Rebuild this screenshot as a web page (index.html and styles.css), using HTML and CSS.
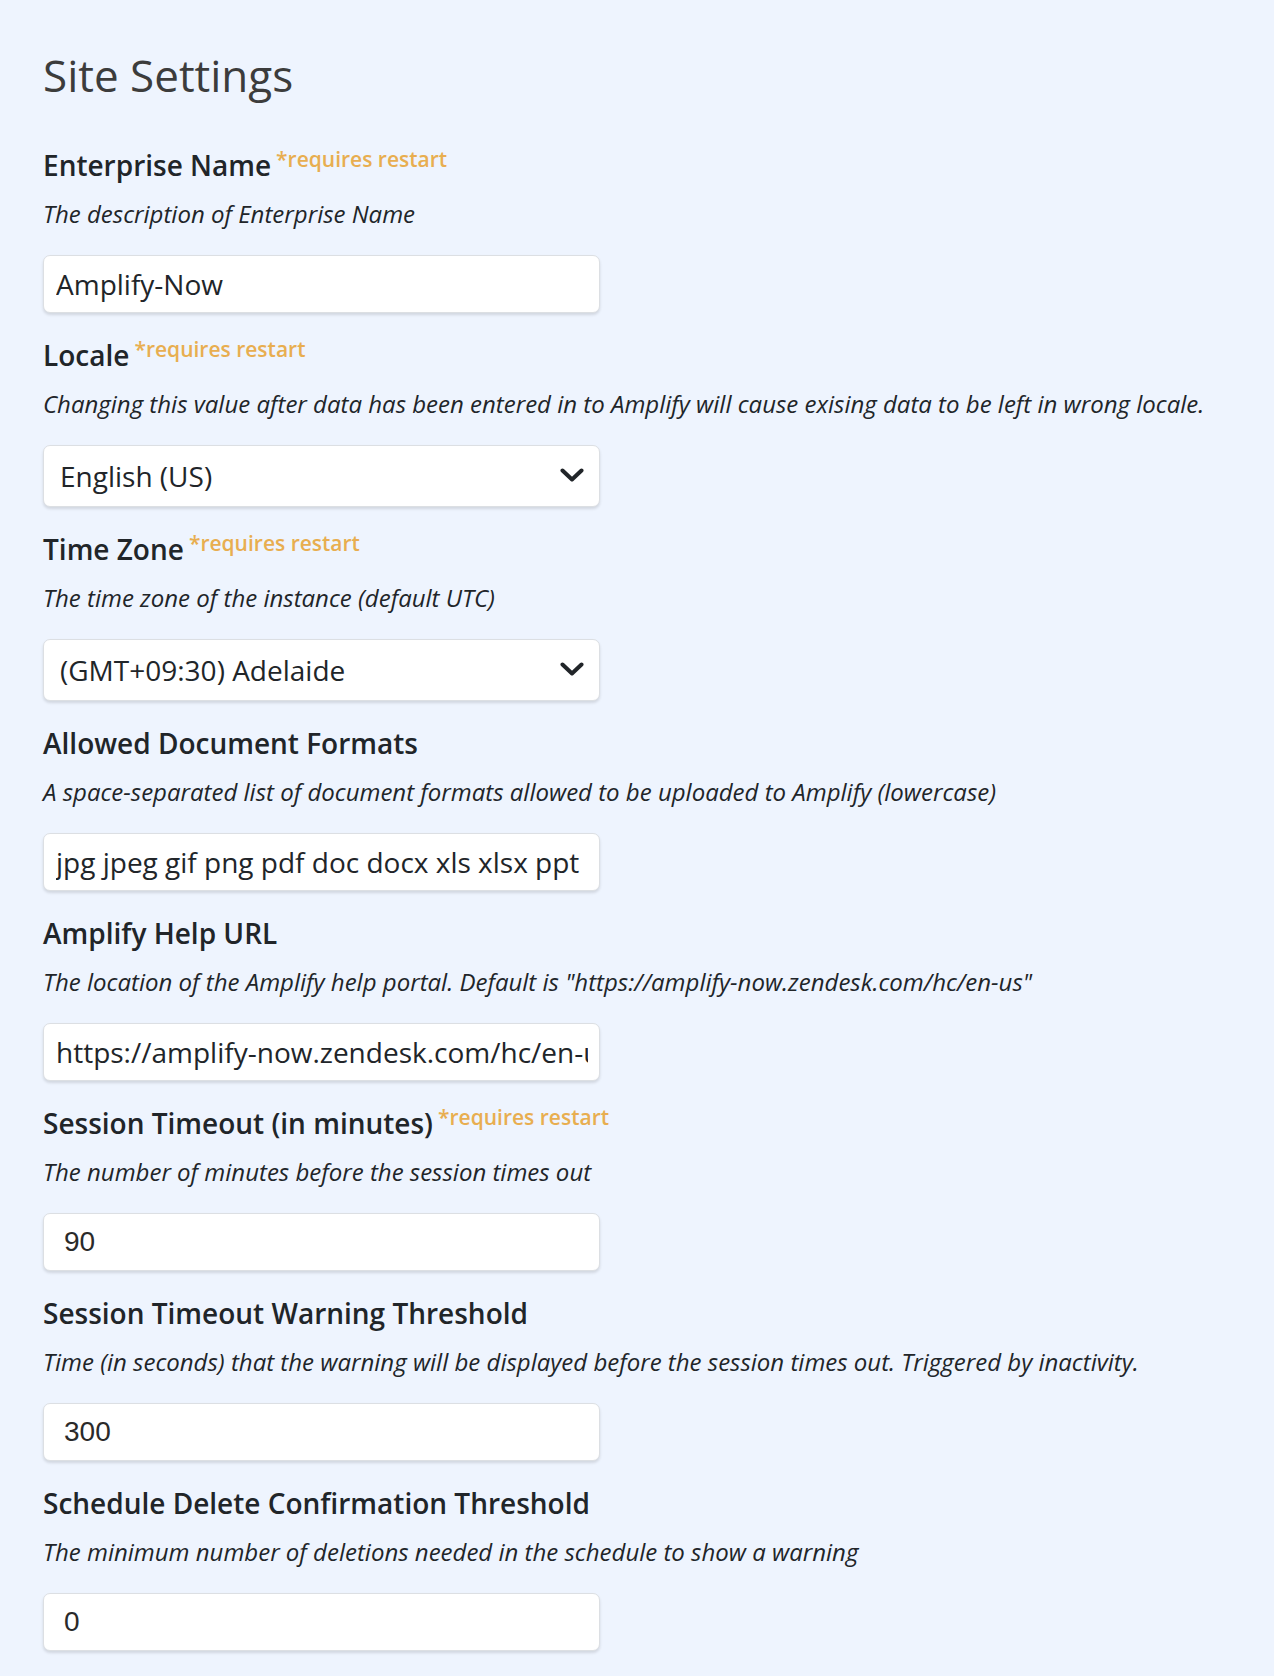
FILE: index.html
```html
<!DOCTYPE html>
<html lang="en">
<head>
<meta charset="utf-8">
<title>Site Settings</title>
<link rel="stylesheet" href="styles.css">
</head>
<body>
<main class="page">
  <h1 class="title">Site Settings</h1>
  <form class="settings">
    <div class="field">
      <label class="label">Enterprise Name<span class="restart">*requires restart</span></label>
      <p class="desc">The description of Enterprise Name</p>
      <input class="control" type="text" value="Amplify-Now">
    </div>
    <div class="field">
      <label class="label">Locale<span class="restart">*requires restart</span></label>
      <p class="desc">Changing this value after data has been entered in to Amplify will cause exising data to be left in wrong locale.</p>
      <div class="select-wrap">
        <select class="control select"><option>English (US)</option></select>
        <svg class="chevron" width="24" height="15" viewBox="0 0 24 15"><path d="M2.5 2.5 L12 11.5 L21.5 2.5" fill="none" stroke="#212529" stroke-width="4" stroke-linecap="round" stroke-linejoin="round"/></svg>
      </div>
    </div>
    <div class="field">
      <label class="label">Time Zone<span class="restart">*requires restart</span></label>
      <p class="desc">The time zone of the instance (default UTC)</p>
      <div class="select-wrap">
        <select class="control select"><option>(GMT+09:30) Adelaide</option></select>
        <svg class="chevron" width="24" height="15" viewBox="0 0 24 15"><path d="M2.5 2.5 L12 11.5 L21.5 2.5" fill="none" stroke="#212529" stroke-width="4" stroke-linecap="round" stroke-linejoin="round"/></svg>
      </div>
    </div>
    <div class="field">
      <label class="label">Allowed Document Formats</label>
      <p class="desc">A space-separated list of document formats allowed to be uploaded to Amplify (lowercase)</p>
      <input class="control" type="text" value="jpg jpeg gif png pdf doc docx xls xlsx ppt">
    </div>
    <div class="field">
      <label class="label">Amplify Help URL</label>
      <p class="desc">The location of the Amplify help portal. Default is "https://amplify-now.zendesk.com/hc/en-us"</p>
      <input class="control" type="text" value="https://amplify-now.zendesk.com/hc/en-us">
    </div>
    <div class="field">
      <label class="label">Session Timeout (in minutes)<span class="restart">*requires restart</span></label>
      <p class="desc">The number of minutes before the session times out</p>
      <input class="control number" type="text" inputmode="numeric" value="90">
    </div>
    <div class="field">
      <label class="label">Session Timeout Warning Threshold</label>
      <p class="desc">Time (in seconds) that the warning will be displayed before the session times out. Triggered by inactivity.</p>
      <input class="control number" type="text" inputmode="numeric" value="300">
    </div>
    <div class="field">
      <label class="label">Schedule Delete Confirmation Threshold</label>
      <p class="desc">The minimum number of deletions needed in the schedule to show a warning</p>
      <input class="control number" type="text" inputmode="numeric" value="0">
    </div>
  </form>
</main>
</body>
</html>
```

FILE: styles.css
```css
html, body {
  margin: 0;
  padding: 0;
  background: #eef4fe;
}
body {
  font-family: "Open Sans", "Noto Sans", sans-serif;
  color: #212529;
}
.page {
  padding: 45px 43px 20px 43px;
}
.title {
  margin: 0;
  font-size: 44px;
  line-height: 60px;
  font-weight: 400;
  color: #3c3c3c;
}
.settings {
  display: flex;
  flex-direction: column;
  gap: 24px;
  margin-top: 42px;
}
.field {
  display: flex;
  flex-direction: column;
}
.label {
  display: block;
  font-size: 28px;
  line-height: 36px;
  font-weight: 600;
  color: #212529;
}
.restart {
  font-size: 21px;
  line-height: 20px;
  font-weight: 600;
  color: #e8ae50;
  vertical-align: 9px;
  margin-left: 5px;
}
.desc {
  margin: 14px 0 25px 0;
  font-size: 24px;
  line-height: 33px;
  font-style: italic;
  color: #212529;
}
.control {
  box-sizing: border-box;
  width: 557px;
  height: 58px;
  margin: 0;
  padding: 0 11px 0 12px;
  font-family: "Open Sans", "Noto Sans", sans-serif;
  font-size: 28px;
  color: #212529;
  background: #ffffff;
  border: 1px solid #dcdfe3;
  border-radius: 7px;
  box-shadow: 0 2px 3px rgba(0, 0, 0, 0.12);
  outline: none;
}
.number {
  font-family: "Liberation Sans", Arial, sans-serif;
  padding-left: 20px;
  color: #2a2a2a;
}
.select-wrap {
  position: relative;
  width: 557px;
}
.select {
  height: 62px;
  padding-left: 16px;
  padding-right: 50px;
  appearance: none;
  -webkit-appearance: none;
}
.chevron {
  position: absolute;
  right: 16px;
  top: 23px;
  pointer-events: none;
}
```
